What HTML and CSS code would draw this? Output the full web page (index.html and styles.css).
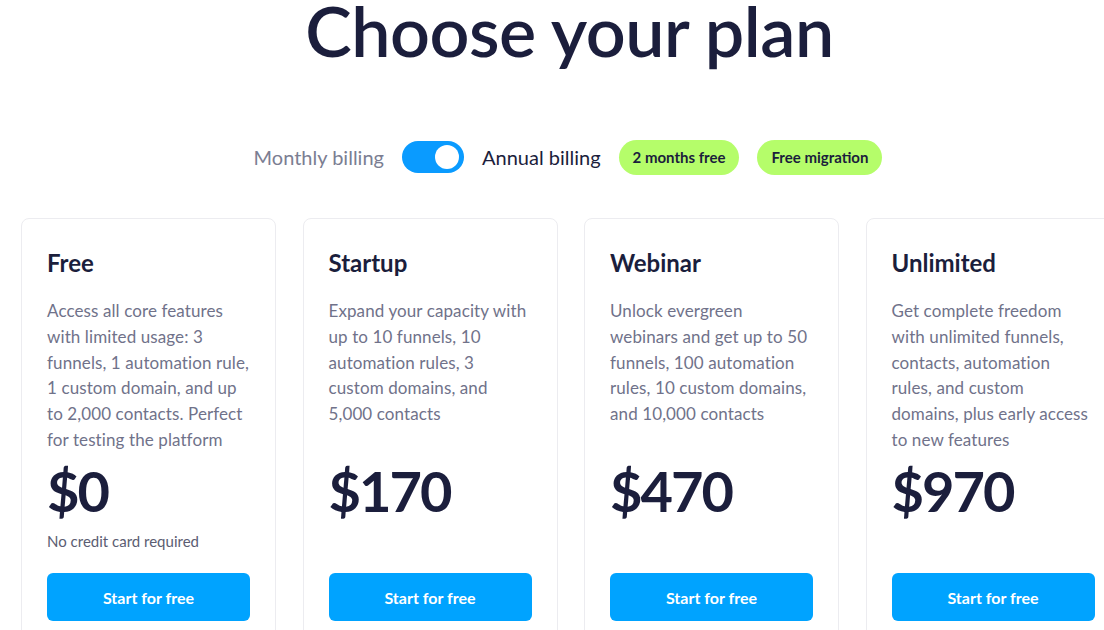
FILE: index.html
```html
<!DOCTYPE html>
<html lang="en">
<head>
    <meta charset="UTF-8">
    <meta name="viewport" content="width=device-width, initial-scale=1.0">
    <title>Pricing</title>
    <link rel="stylesheet" href="styles.css">
</head>
<body>
    <div class="pricing">
        <h1 class="pricing-title">Choose your plan</h1>

        <div class="billing">
            <span class="billing-label">Monthly billing</span>
            <button class="toggle" aria-label="Switch billing period"><span class="toggle-knob"></span></button>
            <span class="billing-label active">Annual billing</span>
            <span class="pill">2 months free</span>
            <span class="pill">Free migration</span>
        </div>

        <div class="plans">
            <div class="plan">
                <h2 class="plan-name">Free</h2>
                <p class="plan-desc">Access all core features with limited usage: 3 funnels, 1 automation rule, 1 custom domain, and up to 2,000 contacts. Perfect for testing the platform</p>
                <div class="plan-price">$0</div>
                <p class="plan-note">No credit card required</p>
                <button class="plan-button">Start for free</button>
            </div>
            <div class="plan">
                <h2 class="plan-name">Startup</h2>
                <p class="plan-desc">Expand your capacity with up to 10 funnels, 10 automation rules, 3 custom domains, and 5,000 contacts</p>
                <div class="plan-price">$170</div>
                <p class="plan-note"></p>
                <button class="plan-button">Start for free</button>
            </div>
            <div class="plan">
                <h2 class="plan-name">Webinar</h2>
                <p class="plan-desc">Unlock evergreen webinars and get up to 50 funnels, 100 automation rules, 10 custom domains, and 10,000 contacts</p>
                <div class="plan-price">$470</div>
                <p class="plan-note"></p>
                <button class="plan-button">Start for free</button>
            </div>
            <div class="plan">
                <h2 class="plan-name">Unlimited</h2>
                <p class="plan-desc">Get complete freedom with unlimited funnels, contacts, automation rules, and custom domains, plus early access to new features</p>
                <div class="plan-price">$970</div>
                <p class="plan-note"></p>
                <button class="plan-button">Start for free</button>
            </div>
        </div>
    </div>
</body>
</html>
```

FILE: styles.css
```css
body {
    margin: 0;
    background-color: #fff;
    font-family: Lato, "Open Sans", sans-serif;
    color: #1b1e3c;
    overflow: hidden;
}

.pricing {
    width: 1104px;
}

.pricing-title {
    margin: 5px 0 0;
    padding-left: 35px;
    font-size: 70px;
    line-height: 50px;
    font-weight: 600;
    text-align: center;
    letter-spacing: -0.5px;
}

.billing {
    display: flex;
    align-items: center;
    justify-content: center;
    gap: 18px;
    margin-top: 84px;
    height: 36px;
    padding-left: 32px;
}

.billing-label {
    font-size: 20px;
    color: #7b7e92;
}

.billing-label.active {
    color: #1b1e3c;
}

.toggle {
    position: relative;
    width: 62px;
    height: 32px;
    border: none;
    border-radius: 16px;
    background-color: #0a9bff;
    padding: 0;
    cursor: pointer;
}

.toggle-knob {
    position: absolute;
    top: 4px;
    right: 5px;
    width: 24px;
    height: 24px;
    border-radius: 50%;
    background-color: #fff;
}

.pill {
    display: inline-flex;
    align-items: center;
    height: 35px;
    padding: 0 14px;
    border-radius: 18px;
    background-color: #b5fd6a;
    font-size: 15px;
    font-weight: 700;
    color: #1b1e3c;
}

.plans {
    display: grid;
    grid-template-columns: repeat(4, 255px);
    gap: 26.5px;
    margin-top: 43px;
    padding-left: 21px;
}

.plan {
    display: flex;
    flex-direction: column;
    border: 1px solid #ececf0;
    border-radius: 8px;
    padding: 26px 25px 40px;
}

.plan-name {
    margin: 0;
    font-size: 24px;
    line-height: 36px;
    font-weight: 700;
}

.plan-desc {
    margin: 17px 0 0;
    height: 155px;
    font-size: 17px;
    line-height: 25.8px;
    letter-spacing: 0.1px;
    color: #70728a;
}

.plan-price {
    margin-top: 3px;
    font-size: 56px;
    line-height: 70px;
    font-weight: 700;
    letter-spacing: -2px;
}

.plan-note {
    margin: 5px 0 0;
    height: 20px;
    font-size: 15px;
    line-height: 20px;
    color: #5b5d72;
}

.plan-button {
    margin-top: 22px;
    height: 48px;
    border: none;
    border-radius: 6px;
    background-color: #00a3ff;
    color: #fff;
    font-family: inherit;
    font-size: 16px;
    font-weight: 700;
    cursor: pointer;
}
```
